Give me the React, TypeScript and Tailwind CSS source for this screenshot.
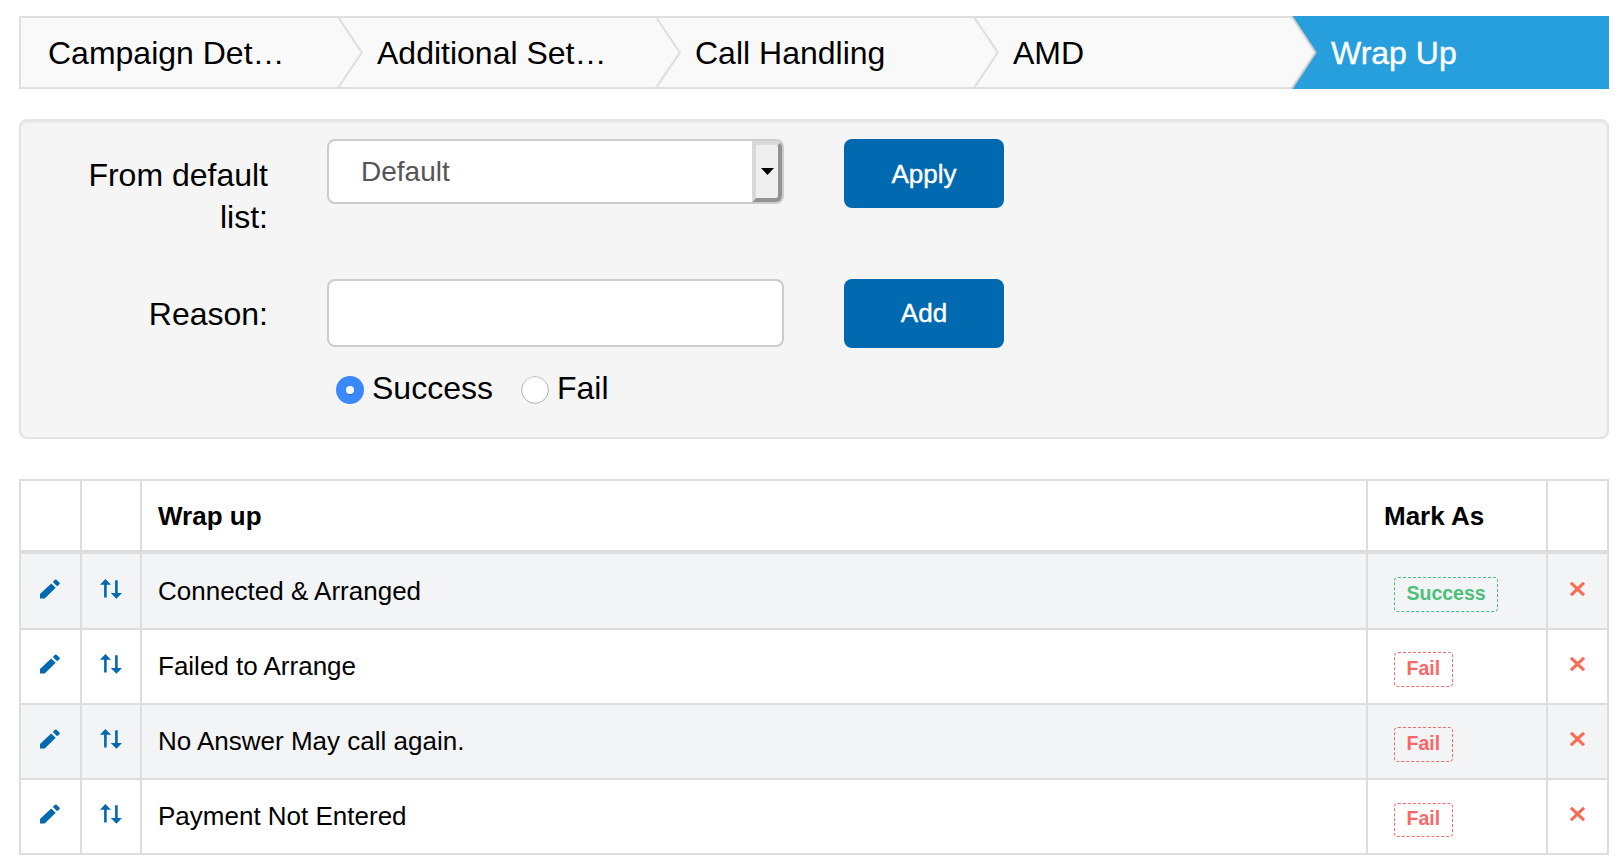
import React from 'react';

const steps = ['Campaign Det…', 'Additional Set…', 'Call Handling', 'AMD', 'Wrap Up'];

const rows: { label: string; mark: 'Success' | 'Fail' }[] = [
  { label: 'Connected & Arranged', mark: 'Success' },
  { label: 'Failed to Arrange', mark: 'Fail' },
  { label: 'No Answer May call again.', mark: 'Fail' },
  { label: 'Payment Not Entered', mark: 'Fail' },
];

function Chevron({ active }: { active: boolean }) {
  return (
    <svg className="block h-[73px] w-[28px] shrink-0" viewBox="0 0 28 73" fill="none">
      {active ? (
        <>
          <defs>
            <filter id="soft" x="-20%" y="-10%" width="140%" height="120%">
              <feGaussianBlur stdDeviation="0.9" />
            </filter>
          </defs>
          <path d="M0 0H2L26 36.5L2 73H0Z" fill="#f9f9f9" />
          <path d="M0 0H2V2H0ZM0 71H2V73H0Z" fill="#dfdfdf" />
          <path d="M1.5 0L25.5 36.5L1.5 73" stroke="#8b9296" strokeWidth="1.6" filter="url(#soft)" />
          <path d="M2 0H28V73H2L26 36.5Z" fill="#269fdc" />
        </>
      ) : (
        <path d="M1.3 1.5L24.8 36.5L1.3 71.5" stroke="#dfdfdf" strokeWidth="2.2" />
      )}
    </svg>
  );
}

function Steps() {
  return (
    <nav className="flex h-[73px]">
      {steps.map((s, i) => {
        const active = i === steps.length - 1;
        return (
          <div
            key={s}
            className={`flex h-[73px] w-[318px] items-center ${
              active
                ? 'bg-[#269fdc] text-white [-webkit-text-stroke:0.4px_white]'
                : 'bg-[#f9f9f9] text-black shadow-[inset_0_2px_0_#dfdfdf,inset_0_-2px_0_#dfdfdf]'
            } ${i === 0 ? 'border-l-2 border-[#dfdfdf]' : ''}`}
          >
            {i > 0 && <Chevron active={active} />}
            <span className={`whitespace-nowrap pt-[2px] text-[32px] leading-[73px] ${i === 0 ? 'pl-[27px]' : 'pl-3'}`}>
              {s}
            </span>
          </div>
        );
      })}
    </nav>
  );
}

function Radio({ checked, label }: { checked?: boolean; label: string }) {
  return (
    <label className="flex items-center gap-2">
      <svg className="mt-[3px] h-7 w-7" viewBox="0 0 28 28">
        {checked ? (
          <>
            <circle cx="14" cy="14" r="14" fill="#3b88fd" />
            <circle cx="14" cy="15" r="4.2" fill="#2a6fdc" />
            <circle cx="14" cy="14" r="4" fill="#fff" />
          </>
        ) : (
          <>
            <circle cx="14" cy="14" r="13.4" fill="#fff" stroke="#b0b0b0" />
            <path d="M2.5 9A12.6 12.6 0 0 1 25.5 9" fill="none" stroke="#ececec" strokeWidth="1.4" />
          </>
        )}
      </svg>
      <span className="text-[32px] leading-[42px]">{label}</span>
    </label>
  );
}

function PencilIcon() {
  return (
    <svg className="mr-[2px] h-5 w-5" viewBox="0 0 20 20" fill="#0069af">
      <path d="M0 15L11.2 4.4L15.7 8.8L4.7 19.6H0Z" />
      <path d="M12.8 2.9L14.9 0.8Q15.7 0.1 16.5 0.8L19.4 3.6Q20.2 4.4 19.4 5.2L17.2 7.3Z" />
    </svg>
  );
}

function SortIcon() {
  return (
    <svg className="h-5 w-[22px]" viewBox="0 0 22 20" fill="#0069af">
      <path d="M5.4 0L11 5.8H6.7V18.6H4.1V5.8H0Z" />
      <path d="M16.4 19.8L10.8 14.1H15.1V1.2H17.7V14.1H22Z" />
    </svg>
  );
}

function CloseIcon() {
  return (
    <svg className="h-[14px] w-[15px]" viewBox="0 0 15 14" fill="none" stroke="#fb6a52" strokeWidth="3">
      <path d="M1 0.8L14 13.2M14 0.8L1 13.2" />
    </svg>
  );
}

export default function App() {
  return (
    <div className="h-[868px] w-[1624px] overflow-hidden bg-white pl-[19px] pr-[15px] pt-4 font-['Liberation_Sans',Arial,sans-serif] text-black">
      <Steps />

      <section className="mt-[30px] h-[320px] rounded-[8px] border-2 border-[#e3e3e3] bg-[#f5f5f5] pt-[18px] shadow-[inset_0_2px_2px_rgba(0,0,0,0.05)]">
        <div className="flex h-[140px] items-start">
          <div className="w-[247px] pl-10 pt-[15px] text-right text-[32px] leading-[42px]">From default list:</div>
          <div className="ml-[59px] flex h-[65px] w-[457px] rounded-[8px] border-2 border-[#ccc] bg-white">
            <div className="flex-1 pl-8 text-[28px] leading-[62px] text-[#555]">Default</div>
            <div className="flex w-[30px] items-center justify-center rounded-r-[6px] border-4 border-b-[#929292] border-l-[#d9d9d9] border-r-[#929292] border-t-[#d9d9d9] bg-[#efefef]">
              <svg className="h-[7px] w-[13px]" viewBox="0 0 13 7">
                <path d="M0 0H13L6.5 7Z" fill="#000" />
              </svg>
            </div>
          </div>
          <button className="ml-[60px] h-[69px] w-[160px] rounded-[8px] bg-[#0069af] pt-[2px] text-[26px] text-white [-webkit-text-stroke:0.4px_white]">
            Apply
          </button>
        </div>
        <div className="flex items-start">
          <div className="w-[247px] pt-[14px] text-right text-[32px] leading-[42px]">Reason:</div>
          <div className="ml-[59px] w-[457px]">
            <div className="h-[68px] rounded-[8px] border-2 border-[#ccc] bg-white" />
            <div className="flex gap-7 pl-[9px] pt-5">
              <Radio checked label="Success" />
              <Radio label="Fail" />
            </div>
          </div>
          <button className="ml-[60px] h-[69px] w-[160px] rounded-[8px] bg-[#0069af] text-[26px] text-white [-webkit-text-stroke:0.4px_white]">
            Add
          </button>
        </div>
      </section>

      <div className="mt-10 border-l-2 border-t-2 border-[#ddd] text-[26px]">
        <div className="grid h-[73px] grid-cols-[61px_60px_1226px_180px_61px] border-b-4 border-[#ddd] font-bold leading-[71px]">
          <div className="border-r-2 border-[#ddd]" />
          <div className="border-r-2 border-[#ddd]" />
          <div className="h-[69px] border-r-2 border-[#ddd] pl-4">Wrap up</div>
          <div className="h-[69px] border-r-2 border-[#ddd] pl-4">Mark As</div>
          <div className="border-r-2 border-[#ddd]" />
        </div>
        {rows.map((r, i) => (
          <div
            key={r.label}
            className={`grid grid-cols-[61px_60px_1226px_180px_61px] border-b-2 border-[#ddd] ${
              i === 0 ? 'h-[76px]' : 'h-[75px]'
            } ${i % 2 === 0 ? 'bg-[#f3f4f5]' : 'bg-white'}`}
          >
            <div className={`flex justify-center border-r-2 border-[#ddd] ${i === 0 ? 'pt-[25px]' : 'pt-6'}`}>
              <PencilIcon />
            </div>
            <div className={`flex justify-center border-r-2 border-[#ddd] ${i === 0 ? 'pt-[25px]' : 'pt-6'}`}>
              <SortIcon />
            </div>
            <div className={`border-r-2 border-[#ddd] pl-4 ${i === 0 ? 'leading-[74px]' : 'leading-[72px]'}`}>
              {r.label}
            </div>
            <div className={`flex items-start border-r-2 border-[#ddd] pl-[26px] ${i === 0 || i === 3 ? 'pt-[23px]' : 'pt-[22px]'}`}>
              <span
                className={`rounded-[4px] border border-dashed px-[11.5px] text-[19.5px] font-bold ${
                  i === 3 ? 'h-[34px] leading-[29px]' : 'h-[35px] leading-[31px]'
                } ${r.mark === 'Success' ? 'border-[#46be8a] text-[#4dbf7c]' : 'border-[#f96868] text-[#f96868]'}`}
              >
                {r.mark}
              </span>
            </div>
            <div className={`flex justify-center border-r-2 border-[#ddd] ${i === 0 ? 'pt-[28px]' : 'pt-[27px]'}`}>
              <CloseIcon />
            </div>
          </div>
        ))}
      </div>
    </div>
  );
}
